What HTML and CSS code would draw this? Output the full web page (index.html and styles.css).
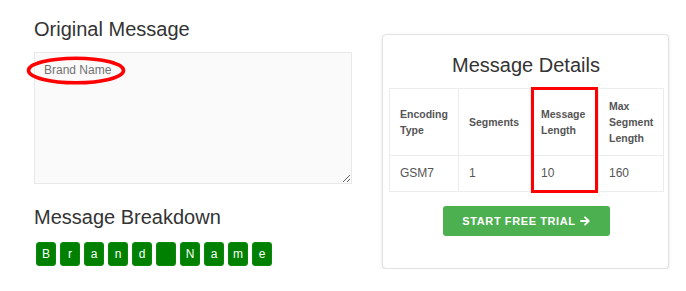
FILE: index.html
```html
<!DOCTYPE html>
<html lang="en">
<head>
<meta charset="utf-8">
<title>Message Details</title>
<link rel="stylesheet" href="styles.css">
</head>
<body>
<div class="page">
  <section class="left">
    <h2 class="heading">Original Message</h2>
    <div class="msg-wrap">
      <textarea class="msg" placeholder="Brand Name"></textarea>
      <svg class="circle" width="100" height="29" viewBox="0 0 100 29" aria-hidden="true">
        <ellipse cx="50" cy="14.5" rx="47.5" ry="12.3" fill="none" stroke="#f00" stroke-width="3.6"/>
      </svg>
    </div>
    <h2 class="heading breakdown-title">Message Breakdown</h2>
    <div class="chars">
      <span class="char">B</span><span class="char">r</span><span class="char">a</span><span class="char">n</span><span class="char">d</span><span class="char"> </span><span class="char">N</span><span class="char">a</span><span class="char">m</span><span class="char">e</span>
    </div>
  </section>

  <section class="card">
    <h2 class="card-title">Message Details</h2>
    <div class="table-wrap">
      <table class="details">
        <colgroup>
          <col class="c1"><col class="c2"><col class="c3"><col class="c4">
        </colgroup>
        <thead>
          <tr>
            <th>Encoding Type</th>
            <th>Segments</th>
            <th>Message Length</th>
            <th>Max Segment Length</th>
          </tr>
        </thead>
        <tbody>
          <tr>
            <td>GSM7</td>
            <td>1</td>
            <td>10</td>
            <td>160</td>
          </tr>
        </tbody>
      </table>
      <span class="highlight"></span>
    </div>
    <div class="actions">
      <button class="cta" type="button">START FREE TRIAL
        <svg class="arrow" width="10" height="10" viewBox="0 0 10 10" aria-hidden="true">
          <path d="M1 5 H8.5 M5 1.3 L8.7 5 L5 8.7" fill="none" stroke="#fff" stroke-width="1.8" stroke-linecap="round" stroke-linejoin="round"/>
        </svg>
      </button>
    </div>
  </section>
</div>
</body>
</html>
```

FILE: styles.css
```css
* { box-sizing: border-box; }

html, body {
  margin: 0;
  padding: 0;
  background: #fff;
}

body {
  font-family: "Liberation Sans", Arial, sans-serif;
  color: #333;
}

.page {
  display: grid;
  grid-template-columns: 318px 287px;
  column-gap: 30px;
  align-items: start;
  padding: 18px 17px 0 34px;
}

.heading {
  margin: 0;
  font-size: 20px;
  line-height: 22px;
  font-weight: 400;
  color: #333;
}

.msg-wrap {
  position: relative;
  margin-top: 12px;
}

.msg {
  display: block;
  width: 318px;
  height: 132px;
  margin: 0;
  padding: 9px 9px;
  border: 1px solid #e8e8e8;
  border-radius: 0;
  background: #fafafa;
  font-family: "Liberation Sans", Arial, sans-serif;
  font-size: 12px;
  line-height: 17px;
  color: #555;
  resize: vertical;
}

.msg::placeholder {
  color: #727272;
}

.circle {
  position: absolute;
  left: -8px;
  top: 4px;
}

.breakdown-title {
  margin-top: 22px;
}

.chars {
  display: flex;
  gap: 4px;
  margin-top: 14px;
  padding-left: 2px;
}

.char {
  display: flex;
  align-items: center;
  justify-content: center;
  width: 20px;
  height: 24px;
  border-radius: 3px;
  background: #008000;
  border: 1px solid #0a8a0a;
  color: #fff;
  font-size: 12px;
  white-space: pre;
}

.card {
  margin-top: 16px;
  border: 1px solid #e2e2e2;
  border-radius: 4px;
  background: #fff;
  box-shadow: 0 1px 3px rgba(0, 0, 0, 0.12);
  padding: 19px 5px 32px 6px;
}

.card-title {
  margin: 0 0 12px;
  font-size: 20px;
  line-height: 22px;
  font-weight: 400;
  text-align: center;
  color: #333;
}

.table-wrap {
  position: relative;
}

.details {
  width: 274px;
  border-collapse: collapse;
  table-layout: fixed;
}

.c1 { width: 69px; }
.c2 { width: 72px; }
.c3 { width: 68px; }
.c4 { width: 65px; }

.details th,
.details td {
  border: 1px solid #ececec;
  text-align: left;
  vertical-align: middle;
  padding: 9px 10px;
}

.details th {
  font-size: 10.5px;
  line-height: 16px;
  font-weight: 700;
  color: #555;
}

.details td {
  font-size: 12px;
  line-height: 17px;
  color: #555;
}

.highlight {
  position: absolute;
  left: 142px;
  top: -1px;
  width: 67px;
  height: 106px;
  border: 3px solid #f00;
  pointer-events: none;
}

.actions {
  display: flex;
  justify-content: center;
  margin-top: 14px;
}

.cta {
  display: flex;
  align-items: center;
  justify-content: center;
  gap: 4px;
  width: 167px;
  height: 30px;
  margin: 0;
  padding: 0;
  border: none;
  border-radius: 3px;
  background: #4caf50;
  color: #fff;
  font-family: "Liberation Sans", Arial, sans-serif;
  font-size: 11px;
  font-weight: 700;
  letter-spacing: 0.6px;
}

.arrow {
  display: block;
}
```
